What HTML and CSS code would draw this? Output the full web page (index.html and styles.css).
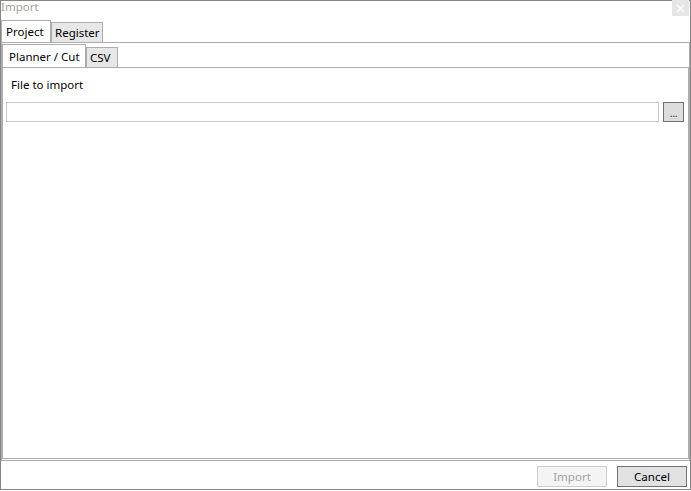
FILE: index.html
```html
<!DOCTYPE html>
<html>
<head>
<meta charset="utf-8">
<link rel="stylesheet" href="styles.css">
</head>
<body>
<div class="window">
  <div class="titlebar">
    <span class="title">Import</span>
    <span class="close"><svg width="9" height="9" viewBox="0 0 9 9"><path d="M1 1L8 8M8 1L1 8" stroke="#ffffff" stroke-width="1.4"/></svg></span>
  </div>
  <div class="tabheader outer">
    <div class="tab selected t-project">Project</div>
    <div class="tab t-register">Register</div>
  </div>
  <div class="panel outerpanel">
    <div class="tabheader inner">
      <div class="tab selected t-planner">Planner / Cut</div>
      <div class="tab t-csv">CSV</div>
    </div>
    <div class="panel innerpanel">
      <div class="label">File to import</div>
      <div class="filerow">
        <div class="textbox"></div>
        <div class="browse"><span class="dots">...</span></div>
      </div>
    </div>
  </div>
  <div class="footer">
    <div class="btn disabled">Import</div>
    <div class="btn cancel">Cancel</div>
  </div>
</div>
</body>
</html>
```
FILE: styles.css
```css
html, body {
  margin: 0;
  padding: 0;
  background: #ffffff;
}
body {
  font-family: "Noto Sans", "Open Sans", sans-serif;
  font-size: 11.5px;
  color: #000000;
}
.window {
  width: 691px;
  height: 490px;
  box-sizing: border-box;
  border: 1px solid #858585;
  display: flex;
  flex-direction: column;
  background: #ffffff;
}
.titlebar {
  height: 18px;
  display: flex;
  justify-content: space-between;
  align-items: flex-start;
}
.title {
  color: #a0a0a0;
  line-height: 12px;
  height: 13px;
}
.close {
  width: 17px;
  height: 16px;
  margin-top: -1px;
  margin-right: 1px;
  background: #e6e6e6;
  display: flex;
  align-items: center;
  justify-content: center;
}
.tabheader {
  display: flex;
  align-items: flex-end;
  border-bottom: 1px solid #acacac;
}
.tabheader.outer {
  height: 23px;
}
.tabheader.inner {
  height: 23px;
}
.tab {
  box-sizing: border-box;
  border: 1px solid #acacac;
  border-bottom: none;
  background: #e7e7e7;
  display: flex;
  align-items: center;
  line-height: 16px;
}
.tab.selected {
  background: #ffffff;
}
.t-project {
  width: 50px;
  height: 22px;
  padding-left: 4px;
  padding-top: 1px;
}
.t-register {
  width: 52px;
  height: 20px;
  padding-left: 3px;
  padding-top: 1px;
}
.t-planner {
  width: 84px;
  height: 23px;
  padding-left: 6px;
  padding-top: 1px;
}
.t-csv {
  width: 32px;
  height: 20px;
  padding-left: 3px;
  padding-top: 1px;
}
.panel {
  display: flex;
  flex-direction: column;
}
.outerpanel {
  flex: 1;
  border-left: 1px solid #acacac;
  border-right: 1px solid #acacac;
  border-bottom: 1px solid #acacac;
  padding-top: 1px;
  padding-bottom: 1px;
}
.innerpanel {
  flex: 1;
  border-left: 1px solid #acacac;
  border-right: 1px solid #acacac;
  border-bottom: 1px solid #acacac;
  padding: 0 4px 0 3px;
}
.label {
  margin-top: 9px;
  padding-left: 5px;
  line-height: 16px;
  height: 16px;
}
.filerow {
  display: flex;
  margin-top: 9px;
  gap: 4px;
}
.textbox {
  flex: 1;
  height: 20px;
  box-sizing: border-box;
  border: 1px solid #c6c6c6;
  background: #ffffff;
}
.browse {
  width: 21px;
  height: 20px;
  box-sizing: border-box;
  border: 1px solid #707070;
  background: #dddddd;
  display: flex;
  justify-content: center;
  align-items: flex-end;
  font-size: 11px;
  line-height: 14px;
  color: #3a3a5a;
}
.dots {
  letter-spacing: -0.5px;
  padding-bottom: 1px;
}
.footer {
  height: 28px;
  display: flex;
  justify-content: flex-end;
  align-items: flex-start;
  padding-top: 5px;
  padding-right: 3px;
  gap: 10px;
  box-sizing: border-box;
}
.btn {
  width: 70px;
  height: 21px;
  box-sizing: border-box;
  border: 1px solid #adadad;
  display: flex;
  align-items: center;
  justify-content: center;
  line-height: 16px;
}
.btn.disabled {
  background: #f4f4f4;
  border-color: #cccccc;
  color: #a3a3a3;
}
.btn.cancel {
  background: #e1e1e1;
  border-color: #707070;
}
```
